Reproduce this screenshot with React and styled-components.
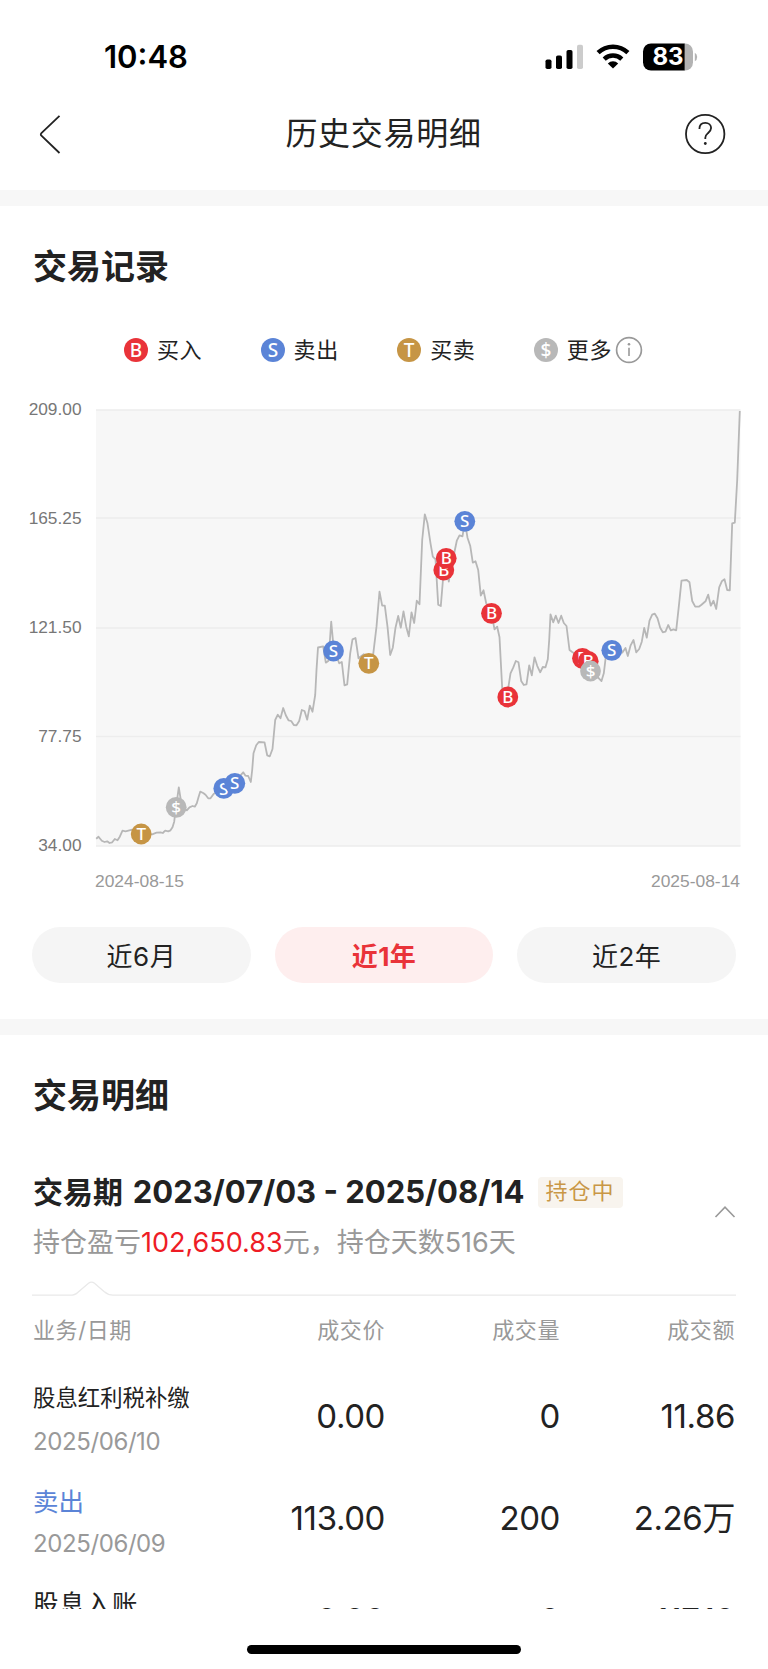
import React from "react"
import styled, { createGlobalStyle, css } from "styled-components"

const colors = {
  buy: "#e93339",
  sell: "#5b84d7",
  both: "#c69545",
  more: "#b8b8b8",
}

const legend = [
  { letter: "B", color: colors.buy, label: "买入" },
  { letter: "S", color: colors.sell, label: "卖出" },
  { letter: "T", color: colors.both, label: "买卖" },
  { letter: "$", color: colors.more, label: "更多", info: true },
]

const axis = ["209.00", "165.25", "121.50", "77.75", "34.00"]

const gridLines = [0, 108, 218, 326.5, 436]

const prices = `0.2,428.7 2.5,426.7 5.8,430.7 8.5,432 11.2,431.3 13.5,433 16.2,432.3
18.8,429 21.5,430.3 23.8,426.7 26.5,420.7 29.5,421.3 36.2,419.7 45.2,424 56.2,424.3
60.5,422.7 64.5,422.3 66.8,423 69.2,420.7 72.2,421.3 74.5,420.3 76.5,417.3 78.2,411.7
79.2,403.3 80.8,391.7 82.8,377.3 84.8,390 87.8,398.3 90.8,400.3 93.5,397.3 96.5,396
98.8,396.7 100.8,393.3 102.5,387.3 104.2,381.7 107.2,383 109.5,384.7 112.2,388.3
114.5,388.3 117.8,383.7 127.8,379.3 138.8,373.3 144.5,365.3 147.2,362.3 149.5,365.7
152.2,366 154.8,372 156.2,360 157.5,343.3 160.2,335.3 162.8,332 168.5,332.3
171.2,345.3 173.8,346.3 176.5,339 177.8,325 179.2,310 181.8,304.7 184.5,308.3
187.2,298 189.8,305.3 192.5,310.3 195.2,311 197.8,315 200.5,315.3 203.2,311
205.8,300 208.5,301 211.2,309.7 213.8,295.7 216.5,301.7 219.2,285 220.5,260
222,237.5 227.2,236.3 229.8,252.7 232.5,250.7 235.2,211.7 237.5,236.7 240.5,246
243.2,253.3 245.8,252 248.5,275.3 251.2,274.3 254.2,243.3 256.5,229.3 259.5,228
262.5,248.3 267.8,244.3 272.8,249.3 277.2,244.3 280.5,216.7 283.5,181.7 286.2,195.7
288.8,195.7 291.5,216.7 294.2,245 296.8,237.7 299.5,217.7 302.2,206 304.8,217.7
307.5,201.3 310.2,216.7 312.8,226.3 315.5,202.3 318.2,213 320.8,190.7 323.5,194.3
326.2,130 328.8,104.3 331.5,113.3 334.5,133.3 336.8,146.7 339.5,149.3 342.2,194.7
344.8,196 347.5,163.3 350.2,156.7 352.8,171.7 355.5,153.3 358.2,143.3 360.8,130.7
363.5,125.3 366.5,126.3 368.8,111.7 371.5,127.7 374.2,135.7 376.8,152.7 379.5,151.3
382.2,160 384.8,185.7 387.5,180.3 390.2,193.3 395.5,203.3 398.5,219.3 401.2,216.7
403.5,227.3 406.2,278.3 408.8,290 412.2,278.3 414.5,263.3 417.2,257.7 419.8,251
422.5,252.3 425.2,271 427.8,275 430.5,274.3 433.2,255.3 435.8,265.3 438.5,247.3
441.2,255.8 444.2,262.3 446.8,257 449.5,257.3 451.8,249.3 453.2,230 454.5,204.3
457.2,212.3 459.8,205.7 462.5,213 465.2,205.7 467.8,213 470.5,216 473.5,240
476.2,242 486.2,248.3 492.8,253.3 499.5,261.7 502.8,268.3 505.5,271 507.8,263.3
509.8,246.7 515.8,240.7 526.2,242.7 529.5,238 531.8,246 534.5,235.7 537.5,230
540.2,242.3 543.2,239 545.8,231.7 548.2,218 550.8,227.7 553.5,210.7 556.2,204.7
558.8,203.7 561.5,208.3 564.2,217.7 566.8,222.3 569.5,221.7 572.2,215 574.8,220.3
577.5,219.3 580.2,220.3 582.8,196.7 585.5,170.7 590.8,170 593.5,172.3 596.2,191
599.2,196.7 602.8,196.7 605.5,194.7 609.5,191.3 612.2,184.7 614.8,195.7 617.5,190.7
620.2,199 623.2,177.3 625.8,171.3 628.5,169.3 631.2,180 633.8,180.3 636.2,113.3
638.8,112.7 641.2,70 643.8,1`

const trades = [
  { x: 45.2, y: 424, letter: "T", color: colors.both },
  { x: 80.2, y: 397.3, letter: "$", color: colors.more },
  { x: 127.8, y: 378.4, letter: "S", color: colors.sell },
  { x: 138.8, y: 373.3, letter: "S", color: colors.sell },
  { x: 237.5, y: 241, letter: "S", color: colors.sell },
  { x: 272.8, y: 253.3, letter: "T", color: colors.both },
  { x: 347.8, y: 160, letter: "B", color: colors.buy },
  { x: 350.2, y: 148.3, letter: "B", color: colors.buy },
  { x: 368.8, y: 111.3, letter: "S", color: colors.sell },
  { x: 395.5, y: 203.3, letter: "B", color: colors.buy },
  { x: 411.8, y: 287, letter: "B", color: colors.buy },
  { x: 486.5, y: 248.3, letter: "B", color: colors.buy },
  { x: 492.2, y: 251.3, letter: "B", color: colors.buy },
  { x: 494.5, y: 261, letter: "$", color: colors.more },
  { x: 515.8, y: 240.3, letter: "S", color: colors.sell },
]

const ranges = [{ label: "近6月" }, { label: "近1年", active: true }, { label: "近2年" }]

const records = [
  { name: "股息红利税补缴", size: "small", date: "2025/06/10", price: "0.00", count: "0", total: "11.86" },
  { name: "卖出", size: "sell", date: "2025/06/09", price: "113.00", count: "200", total: "2.26万" },
  { name: "股息入账", size: "normal", date: "2025/06/09", price: "0.00", count: "0", total: "117.10" },
]

const StatusIcons = () => (
  <svg width="154" height="28" viewBox="0 0 154 28">
    <rect x="0.5" y="16.5" width="6" height="9.5" rx="1.8" />
    <rect x="11" y="12.5" width="6" height="13.5" rx="1.8" />
    <rect x="21.5" y="7" width="6" height="19" rx="1.8" />
    <rect x="32" y="1.7" width="6" height="24.3" rx="1.8" fill="#cccccc" />
    <path d="M68 25.6l-5.2-5.2a7.6 7.6 0 0 1 10.4 0z" strokeLinejoin="round" />
    <path d="M59.2 16.1a12.6 12.6 0 0 1 17.6 0" fill="none" stroke="#000" strokeWidth="4.4" />
    <path d="M53.1 9.7a21.4 21.4 0 0 1 29.8 0" fill="none" stroke="#000" strokeWidth="4.5" />
    <path d="M139 0.5h1a8 8 0 0 1 8 8v11a8 8 0 0 1-8 8h-1z" fill="#b3b3b3" />
    <path d="M106 0.5h33.6v27H106a8 8 0 0 1-8-8v-11a8 8 0 0 1 8-8z" />
    <path d="M149.8 9.7q2.4 1.4 2.4 4.3t-2.4 4.3z" fill="#b3b3b3" />
    <BatteryText x="123" y="22.2">83</BatteryText>
  </svg>
)

const BackIcon = () => (
  <svg width="22" height="40" viewBox="0 0 22 40">
    <path d="M20.5 1.8L2.4 19.2q-1.2 1.2 0 2.4L20.5 39" fill="none" stroke="#222" strokeWidth="1.8" />
  </svg>
)

const HelpIcon = () => (
  <svg width="42" height="42" viewBox="0 0 42 42">
    <g fill="none" stroke="#222" strokeWidth="1.8">
      <circle cx="21.2" cy="21" r="19.2" />
      <path d="M15.400 16c0-3.800 2.400-6.100 5.900-6.100s5.800 2.200 5.800 5.200c0 2.600-1.600 3.800-3.400 5.300-1.700 1.400-2.400 2.400-2.400 4.400v1.300" />
    </g>
    <circle cx="21.3" cy="30.5" r="1.4" fill="#222" />
  </svg>
)

const InfoIcon = () => (
  <svg width="28" height="28" viewBox="0 0 28 28">
    <circle cx="14" cy="14" r="12.4" fill="none" stroke="#999" strokeWidth="1.7" />
    <circle cx="14" cy="8.2" r="1.3" fill="#999" />
    <path d="M14 11.7v8.4" stroke="#999" strokeWidth="1.6" />
  </svg>
)

const Marker = ({ x, y, r, size, color, letter }) => (
  <g>
    <circle cx={x} cy={y} r={r} fill={color} />
    <MarkerLetter x={x} y={y + size * 0.36} $size={size}>
      {letter}
    </MarkerLetter>
  </g>
)

const Chart = () => (
  <Plot viewBox="0 0 644.5 436">
    <rect width="644.5" height="436" fill="#f7f7f7" />
    {gridLines.map((y) => (
      <line key={y} x1="0" x2="644.5" y1={y} y2={y} stroke="#ededed" strokeWidth="1.6" />
    ))}
    <polyline points={prices} fill="none" stroke="#b7b7b7" strokeWidth="1.8" strokeLinejoin="round" />
    {trades.map((trade) => (
      <Marker key={trade.x} r={10.4} size={17} {...trade} />
    ))}
  </Plot>
)

const App = () => {
  return (
    <Page>
      <GlobalStyle />
      <StatusBar>
        <Time>10:48</Time>
        <StatusIcons />
      </StatusBar>
      <NavBar>
        <BackIcon />
        <NavTitle>历史交易明细</NavTitle>
        <HelpIcon />
      </NavBar>
      <Band />
      <Section>
        <Title>交易记录</Title>
        <Legend>
          {legend.map(({ letter, color, label, info }) => (
            <LegendItem key={letter}>
              <svg width="24" height="24" viewBox="0 0 24 24">
                <Marker x={12} y={12} r={12} size={19} color={color} letter={letter} />
              </svg>
              <LegendLabel>{label}</LegendLabel>
              {info && <InfoIcon />}
            </LegendItem>
          ))}
        </Legend>
        <ChartRow>
          <Axis>
            {axis.map((value) => (
              <span key={value}>{value}</span>
            ))}
          </Axis>
          <Chart />
        </ChartRow>
        <Dates>
          <span>2024-08-15</span>
          <span>2025-08-14</span>
        </Dates>
        <Ranges>
          {ranges.map(({ label, active }) => (
            <RangeButton key={label} $active={active}>
              {label}
            </RangeButton>
          ))}
        </Ranges>
      </Section>
      <Band />
      <Section>
        <Title>交易明细</Title>
        <Period>
          <div>
            <PeriodTitle>
              <span>
                <PeriodName>交易期</PeriodName> 2023/07/03 - 2025/08/14
              </span>
              <Tag>持仓中</Tag>
            </PeriodTitle>
            <Summary>
              持仓盈亏<Profit>102,650.83</Profit>元，持仓天数516天
            </Summary>
          </div>
          <Collapse width="22" height="14" viewBox="0 0 22 14">
            <path d="M1.5 12L11 2.2L20.5 12" fill="none" stroke="#999" strokeWidth="1.6" />
          </Collapse>
        </Period>
        <Divider viewBox="0 0 704 16">
          <path
            d="M0 14.2H38q5 0 8-3L56.500 2.200q3-2.200 6 0L72 10.500q4.500 3.700 9 3.700H704"
            fill="none"
            stroke="#e9e9e9"
            strokeWidth="1.3"
          />
        </Divider>
        <HeadRow>
          <span>业务/日期</span>
          <HeadCell>成交价</HeadCell>
          <HeadCell>成交量</HeadCell>
          <HeadCell>成交额</HeadCell>
        </HeadRow>
        <Records>
          {records.map(({ name, size, date, price, count, total }) => (
            <Record key={name}>
              <Business>
                <RecordName $size={size}>{name}</RecordName>
                <RecordDate>{date}</RecordDate>
              </Business>
              <Value>{price}</Value>
              <Value>{count}</Value>
              <Value>{total}</Value>
            </Record>
          ))}
        </Records>
      </Section>
      <HomeBar />
    </Page>
  )
}

export default App

const GlobalStyle = createGlobalStyle`
  * {
    box-sizing: border-box;
  }

  body {
    margin: 0;
    background: #fff;
  }

  svg {
    display: block;
    flex-shrink: 0;
  }
`

const Page = styled.main`
  display: flex;
  flex-direction: column;
  width: 768px;
  height: 1669px;
  overflow: hidden;
  background: #fff;
  color: #222;
  font-family: Inter, "Noto Sans CJK SC", sans-serif;
`

const StatusBar = styled.header`
  display: flex;
  flex-shrink: 0;
  justify-content: space-between;
  align-items: center;
  height: 114px;
  padding: 0 69px 0 104px;
`

const Time = styled.span`
  color: #000;
  font-size: 31px;
  font-weight: 600;
  line-height: 40px;
`

const BatteryText = styled.text`
  fill: #fff;
  font-size: 24px;
  font-weight: 700;
  text-anchor: middle;
`

const NavBar = styled.nav`
  display: flex;
  flex-shrink: 0;
  justify-content: space-between;
  align-items: center;
  height: 76px;
  padding: 0 42px 36px 39px;
`

const NavTitle = styled.h1`
  margin: 0 0 0 22px;
  font-size: 32px;
  font-weight: 400;
  line-height: 40px;
  letter-spacing: 0.7px;
`

const Band = styled.div`
  flex-shrink: 0;
  height: 16px;
  background: #f7f7f7;
`

const Section = styled.section`
  display: flex;
  flex-direction: column;
  flex-shrink: 0;
  padding: 41px 32px 0;

  &:first-of-type {
    height: 813px;
  }
`

const Title = styled.h2`
  margin: 0 0 0 1px;
  font-size: 34px;
  font-weight: 700;
  line-height: 40px;
`

const Legend = styled.div`
  display: flex;
  gap: 55.4px;
  height: 28px;
  margin: 49px 0 0 92px;
`

const LegendItem = styled.div`
  display: flex;
  align-items: center;
`

const LegendLabel = styled.span`
  margin: 0 3px 0 9px;
  font-size: 22px;
  line-height: 28px;
  letter-spacing: 0.6px;
`

const MarkerLetter = styled.text`
  fill: #fff;
  font-family: "Noto Sans", sans-serif;
  font-size: ${({ $size }) => $size}px;
  font-weight: 500;
  text-anchor: middle;
`

const ChartRow = styled.div`
  display: flex;
  justify-content: flex-end;
  height: 436px;
  margin: 46px -4px 0 -12px;
`

const Axis = styled.div`
  display: flex;
  flex-direction: column;
  justify-content: space-between;
  margin: -11px 14px -9px 0;
  color: #777;
  font-family: "Liberation Sans", sans-serif;
  font-size: 17.3px;
  line-height: 20px;
  text-align: right;
`

const Plot = styled.svg`
  width: 644.5px;
  height: 436px;
  overflow: visible;
`

const Dates = styled.div`
  display: flex;
  justify-content: space-between;
  margin: 25px -4px 0 63px;
  color: #999;
  font-family: "Liberation Sans", sans-serif;
  font-size: 17.4px;
  line-height: 20px;
`

const Ranges = styled.div`
  display: grid;
  grid-template-columns: repeat(3, 1fr);
  gap: 24px;
  margin-top: 36px;
`

const RangeButton = styled.button`
  height: 56px;
  padding: 0 0 2px;
  border: 0;
  border-radius: 28px;
  background: #f5f5f5;
  color: #222;
  font-family: inherit;
  font-size: 26px;
  letter-spacing: 0.5px;

  ${({ $active }) =>
    $active &&
    css`
      background: #feeeee;
      color: #e93339;
      font-weight: 700;
    `}
`

const Period = styled.div`
  display: flex;
  justify-content: space-between;
  align-items: center;
  margin: 56px 0 0 1px;
`

const PeriodTitle = styled.div`
  display: flex;
  align-items: center;
  height: 40px;
  font-size: 31px;
  font-weight: 700;
  line-height: 40px;
  white-space: nowrap;
`

const PeriodName = styled.span`
  margin-right: 2.5px;
  font-size: 30px;
`

const Tag = styled.span`
  width: 85px;
  height: 31px;
  margin-left: 13px;
  border-radius: 4px;
  background: #f8f4ee;
  color: #c99746;
  font-size: 22px;
  font-weight: 400;
  line-height: 29px;
  letter-spacing: 1px;
  text-align: center;
`

const Summary = styled.div`
  margin-top: 15px;
  color: #999;
  font-size: 27px;
  line-height: 32px;
`

const Profit = styled.span`
  color: #ee1c25;
`

const Collapse = styled.svg`
  margin-bottom: 8px;
`

const Divider = styled.svg`
  width: 704px;
  height: 16px;
  margin-top: 22px;
`

const columns = css`
  display: grid;
  grid-template-columns: 176px 176px 175px 175px;
  padding-left: 1px;
`

const HeadRow = styled.div`
  ${columns}
  margin-top: 21px;
  color: #999;
  font-size: 22px;
  line-height: 24px;
  letter-spacing: 0.6px;
`

const HeadCell = styled.span`
  text-align: right;
`

const Records = styled.div`
  height: 244px;
  margin-top: 23px;
  overflow: hidden;
`

const Record = styled.div`
  ${columns}
  align-items: center;
  height: 102px;
`

const Business = styled.div`
  padding-top: 5px;
`

const nameStyles = {
  small: css`
    font-size: 22.4px;
    line-height: 38px;
  `,
  sell: css`
    margin-bottom: -3px;
    color: ${colors.sell};
    font-size: 25.5px;
    line-height: 41px;
  `,
  normal: css`
    margin-bottom: -3px;
    font-size: 25.5px;
    line-height: 41px;
    letter-spacing: 0.8px;
  `,
}

const RecordName = styled.div`
  white-space: nowrap;
  ${({ $size }) => nameStyles[$size]}
`

const RecordDate = styled.div`
  padding-top: 9px;
  color: #999;
  font-size: 24px;
  line-height: 32px;
  letter-spacing: -0.4px;
`

const Value = styled.span`
  font-size: 33px;
  line-height: 40px;
  letter-spacing: -0.4px;
  text-align: right;
`

const HomeBar = styled.div`
  flex-shrink: 0;
  width: 274px;
  height: 9px;
  margin: 36px auto 0;
  border-radius: 5px;
  background: #000;
`
